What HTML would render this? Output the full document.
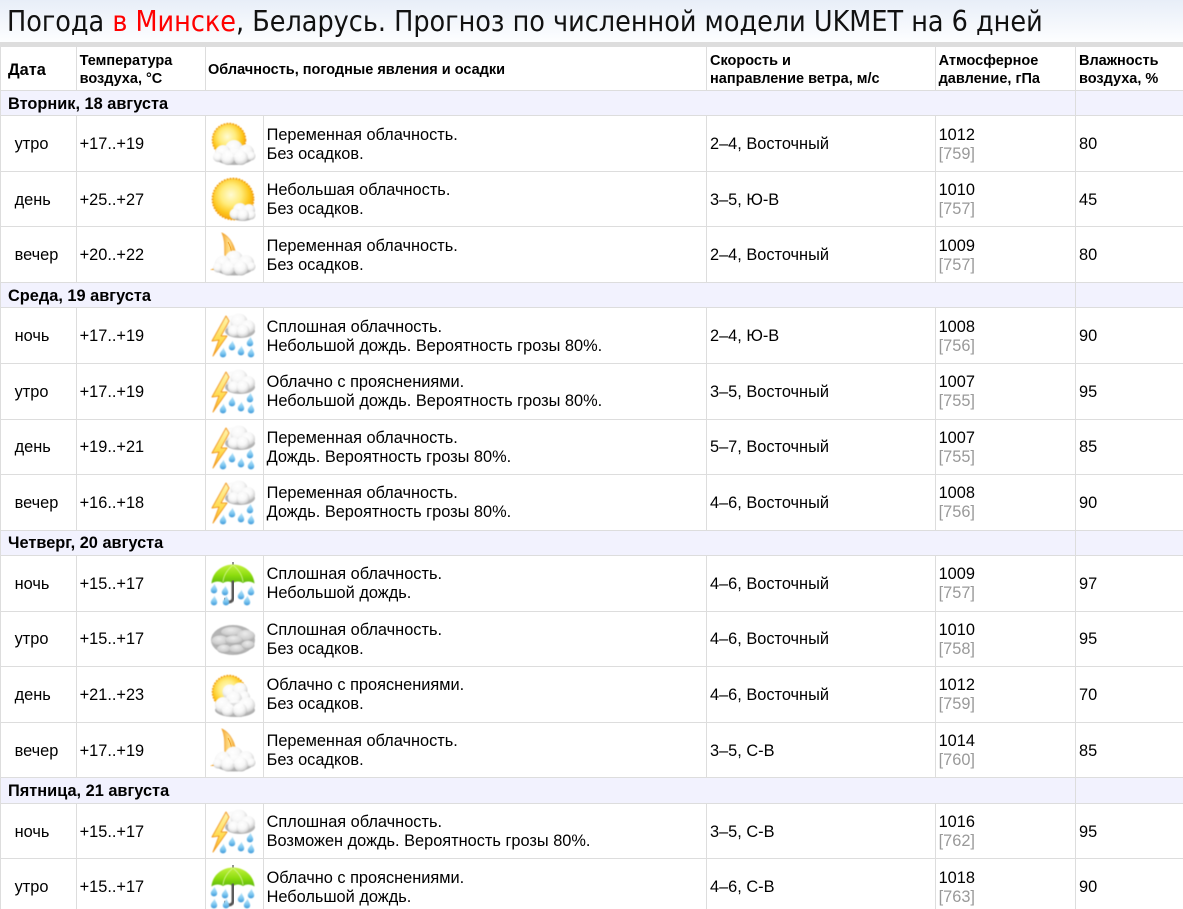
<!DOCTYPE html>
<html lang="ru"><head><meta charset="utf-8"><title>Погода в Минске</title>
<style>
html,body{margin:0;padding:0;background:#fff;width:1183px;height:909px;overflow:hidden}
#p{position:relative;width:1183px;height:909px;overflow:hidden;font:16.35px/19px "Liberation Sans",sans-serif;color:#000}
#t{position:absolute;left:0;top:0;width:1183px;height:42px;background:linear-gradient(to bottom,#e8eef8,#fdfeff)}
#t h1{margin:0;position:absolute;left:7px;top:3px;font:400 28.4px/38px "DejaVu Sans Condensed","DejaVu Sans",sans-serif;font-stretch:condensed;color:#111;white-space:nowrap}
#t b{font-weight:400;color:#f00}
#band{position:absolute;left:0;top:42px;width:1183px;height:5px;background:#ddd}
.r{position:absolute;left:0;width:1183px;border-bottom:1px solid #ddd}
.r>div{position:absolute;top:0;bottom:0;padding-top:2px;display:flex;align-items:center;border-left:1px solid #ddd;box-sizing:border-box;white-space:nowrap}
.a{left:0;width:76px;padding-left:13.6px}
.b{left:76px;width:129px;padding-left:2.6px}
.c{left:205px;width:58px}
.d{left:263px;width:443px;padding-left:2.6px}
.e{left:706px;width:229px;padding-left:3px}
.f{left:935px;width:140px;padding-left:2.6px}
.g{left:1075px;width:108px;padding-left:3px}
.r.h>div{font-weight:700;font-size:14.5px;line-height:18px;padding-top:2px}
.r.h>.a{padding-left:7px;font-size:16.35px;padding-top:3px}
.r.h>.c{width:501px;padding-left:2px}
.s{background:#f2f2fe}
.r.s>.w{left:0;width:1075px;padding-left:7px;font-weight:700}
.r.s>.g{padding:0}
.r.u>.d,.r.u>.f{padding-top:0}
.r.v>.a,.r.v>.b,.r.v>.e,.r.v>.g{padding-top:0}
.r.s.v>.w{padding-top:0}
i{font-style:normal;color:#999}
svg{position:absolute;left:4px;top:5px;width:46px;height:46px}
</style></head><body><div id="p">
<svg width="0" height="0" style="position:absolute;left:0;top:0">
<defs>
<radialGradient id="sun" cx=".45" cy=".4" r=".62"><stop offset="0" stop-color="#fffbd4"/><stop offset=".4" stop-color="#ffec7c"/><stop offset=".72" stop-color="#fdc81e"/><stop offset="1" stop-color="#f59f08"/></radialGradient>
<radialGradient id="pf" cx=".42" cy=".32" r=".72"><stop offset="0" stop-color="#fff"/><stop offset=".5" stop-color="#f7f7f7"/><stop offset=".8" stop-color="#d9d9d9"/><stop offset="1" stop-color="#a6a6a6"/></radialGradient>
<radialGradient id="gc" cx=".45" cy=".3" r=".75"><stop offset="0" stop-color="#ececec"/><stop offset=".6" stop-color="#cfcfcf"/><stop offset="1" stop-color="#999"/></radialGradient>
<linearGradient id="dr" x1="0" y1="0" x2="0" y2="1"><stop offset="0" stop-color="#c4e9fc"/><stop offset=".6" stop-color="#7cc6f0"/><stop offset="1" stop-color="#3a96d8"/></linearGradient>
<linearGradient id="bo" x1="0" y1="0" x2="0" y2="1"><stop offset="0" stop-color="#fff6b0"/><stop offset=".6" stop-color="#ffdc50"/><stop offset="1" stop-color="#fbb02a"/></linearGradient>
<linearGradient id="um" x1="0" y1="0" x2="0" y2="1"><stop offset="0" stop-color="#c4f040"/><stop offset=".55" stop-color="#8ede10"/><stop offset="1" stop-color="#5cb806"/></linearGradient>
<linearGradient id="mo" x1="0" y1="0" x2="1" y2="0"><stop offset="0" stop-color="#f5a832"/><stop offset=".5" stop-color="#ffdf8a"/><stop offset="1" stop-color="#f29f24"/></linearGradient>
<filter id="sf" x="-10%" y="-10%" width="120%" height="120%"><feGaussianBlur stdDeviation=".45"/></filter>
<g id="drop"><path d="M.6-5.5C1.2-2.8 3.2-1 3.2 1.3 3.2 3.2 1.700 4.4 0 4.4S-3.2 3.2-3.2 1.3C-3.2-1-.4-2.800.6-5.5Z" fill="url(#dr)" filter="url(#sf)"/></g>
<g id="cloudA" filter="url(#sf)">
<ellipse cx="24" cy="35" rx="20" ry="9" fill="#b0b0b0"/>
<circle cx="24" cy="28" r="9" fill="url(#pf)"/><circle cx="13" cy="32" r="8" fill="url(#pf)"/><circle cx="36" cy="31.5" r="8" fill="url(#pf)"/><circle cx="8" cy="36" r="5" fill="url(#pf)"/><circle cx="41" cy="35" r="4.5" fill="url(#pf)"/><circle cx="18" cy="37" r="7" fill="url(#pf)"/><circle cx="31" cy="37" r="7" fill="url(#pf)"/><ellipse cx="24" cy="32" rx="9" ry="4" fill="#fff" opacity=".6"/>
</g>
<g id="i1"><circle cx="19" cy="19" r="16.5" fill="url(#sun)" stroke="#f39c08" stroke-width="1.5" stroke-dasharray="1.8 1.2" filter="url(#sf)"/><use href="#cloudA"/></g>
<g id="i2"><circle cx="23" cy="22" r="20.5" fill="url(#sun)" stroke="#f39c08" stroke-width="1.7" stroke-dasharray="1.8 1.2" filter="url(#sf)"/>
<g filter="url(#sf)"><ellipse cx="33" cy="38" rx="12" ry="6" fill="#b0b0b0"/><circle cx="30" cy="33" r="7" fill="url(#pf)"/><circle cx="25" cy="37" r="5.5" fill="url(#pf)"/><circle cx="39" cy="33" r="6" fill="url(#pf)"/><circle cx="41" cy="38" r="4.5" fill="url(#pf)"/><circle cx="33" cy="38" r="6" fill="url(#pf)"/></g></g>
<g id="i3"><path d="M12 1C20 5 26 15 26 27L15 26C14 18 16 10 12 1Z" fill="url(#mo)" stroke="#f0a028" stroke-width=".7" filter="url(#sf)"/><path d="M18 10C21 15 22 21 22 26" stroke="#f0a028" stroke-width=".9" fill="none"/><path d="M0 38L7 35 11 38Z" fill="#f29a14" filter="url(#sf)"/><use href="#cloudA" y="-.5"/></g>
<g id="i4"><circle cx="19" cy="20" r="16.5" fill="url(#sun)" stroke="#f39c08" stroke-width="1.5" stroke-dasharray="1.8 1.2" filter="url(#sf)"/><g filter="url(#sf)"><circle cx="20" cy="20" r="7.5" fill="url(#pf)"/><circle cx="30" cy="18" r="7.5" fill="url(#pf)"/><circle cx="34" cy="25" r="6" fill="url(#pf)"/><circle cx="24" cy="27" r="8" fill="url(#pf)"/><ellipse cx="25" cy="38" rx="20" ry="7" fill="#b0b0b0"/><circle cx="13" cy="33" r="8" fill="url(#pf)"/><circle cx="37" cy="33" r="8" fill="url(#pf)"/><circle cx="18" cy="38" r="6.5" fill="url(#pf)"/><circle cx="30" cy="38" r="7" fill="url(#pf)"/><ellipse cx="25" cy="32" rx="8" ry="4" fill="#fff" opacity=".6"/></g></g>
<g id="storm"><g filter="url(#sf)"><ellipse cx="30" cy="18" rx="15" ry="7" fill="#b4b4b4"/><circle cx="22" cy="10" r="7.5" fill="url(#pf)"/><circle cx="29" cy="9" r="8.5" fill="url(#pf)"/><circle cx="38" cy="14" r="7" fill="url(#pf)"/><circle cx="24" cy="18" r="6" fill="url(#pf)"/><circle cx="33" cy="18" r="6.5" fill="url(#pf)"/></g>
<path d="M16 3L2 28 9 27 3 43 17 23 11 23 19 8Z" fill="url(#bo)" stroke="#f39a1c" stroke-width="1" stroke-linejoin="round" filter="url(#sf)"/>
<use href="#drop" x="13" y="40"/><use href="#drop" x="22" y="33"/><use href="#drop" x="31" y="38"/><use href="#drop" x="40" y="29"/><use href="#drop" x="41" y="40"/></g>
<g id="umb"><path d="M23 1V5" stroke="#666" stroke-width="1.4"/><path d="M1.500 22.5C2.500 11 12 3.500 23 3.500S43.500 11 44.500 22.5C41 20 36 20 33 22 30 20 26 20 23 22 20 20 16 20 13 22 10 20 5 20 1.500 22.5Z" fill="url(#um)" filter="url(#sf)"/><path d="M23 4C17 9 13.500 15 13 21M23 4C29 9 32.500 15 33 21" stroke="#d9f7a0" stroke-width=".8" fill="none" filter="url(#sf)"/>
<path d="M23 21V37C23 42 16 42 15 38.500" stroke="#555" stroke-width="3" fill="none" stroke-linecap="round" filter="url(#sf)"/>
<use href="#drop" x="4" y="28"/><use href="#drop" x="4" y="40"/><use href="#drop" x="15" y="30"/><use href="#drop" x="16" y="40"/><use href="#drop" x="31" y="34"/><use href="#drop" x="41" y="30"/><use href="#drop" x="37" y="40"/></g>
<g id="gray" filter="url(#sf)" transform="translate(0,-5)"><ellipse cx="23" cy="28" rx="22" ry="15" fill="#b4b4b4"/><ellipse cx="10" cy="29" rx="8.5" ry="5.5" fill="url(#gc)"/><ellipse cx="22" cy="20" rx="11" ry="5" fill="url(#gc)"/><ellipse cx="36" cy="24" rx="9" ry="6" fill="url(#gc)"/><ellipse cx="24" cy="28" rx="9" ry="4.5" fill="url(#gc)"/><ellipse cx="14" cy="37" rx="7" ry="4.5" fill="url(#gc)"/><ellipse cx="27" cy="37" rx="8" ry="4.5" fill="url(#gc)"/><ellipse cx="38" cy="33" rx="6.5" ry="4.5" fill="url(#gc)"/></g>
</defs></svg>

<div id="t"><h1>Погода <b>в Минске</b>, Беларусь. Прогноз по численной модели UKMET на 6 дней</h1></div>
<div id="band"></div>

<div class="r h" style="top:47px;height:43px"><div class="a">Дата</div><div class="b">Температура<br>воздуха, °С</div><div class="c">Облачность, погодные явления и осадки</div><div class="e">Скорость и<br>направление ветра, м/с</div><div class="f">Атмосферное<br>давление, гПа</div><div class="g">Влажность<br>воздуха, %</div></div>

<div class="r s" style="top:91px;height:24px"><div class="w">Вторник, 18 августа</div><div class="g"></div></div>
<div class="r" style="top:116px;height:55px"><div class="a">утро</div><div class="b">+17..+19</div><div class="c"><svg viewBox="0 0 46 46"><use href="#i1"/></svg></div><div class="d"><span>Переменная облачность.<br>Без осадков.</span></div><div class="e">2–4, Восточный</div><div class="f"><span>1012<br><i>[759]</i></span></div><div class="g">80</div></div>
<div class="r" style="top:172px;height:54px"><div class="a">день</div><div class="b">+25..+27</div><div class="c"><svg viewBox="0 0 46 46"><use href="#i2"/></svg></div><div class="d"><span>Небольшая облачность.<br>Без осадков.</span></div><div class="e">3–5, Ю-В</div><div class="f"><span>1010<br><i>[757]</i></span></div><div class="g">45</div></div>
<div class="r" style="top:227px;height:55px"><div class="a">вечер</div><div class="b">+20..+22</div><div class="c"><svg viewBox="0 0 46 46"><use href="#i3"/></svg></div><div class="d"><span>Переменная облачность.<br>Без осадков.</span></div><div class="e">2–4, Восточный</div><div class="f"><span>1009<br><i>[757]</i></span></div><div class="g">80</div></div>

<div class="r s" style="top:283px;height:24px"><div class="w">Среда, 19 августа</div><div class="g"></div></div>
<div class="r" style="top:308px;height:55px"><div class="a">ночь</div><div class="b">+17..+19</div><div class="c"><svg viewBox="0 0 46 46"><use href="#storm"/></svg></div><div class="d"><span>Сплошная облачность.<br>Небольшой дождь. Вероятность грозы 80%.</span></div><div class="e">2–4, Ю-В</div><div class="f"><span>1008<br><i>[756]</i></span></div><div class="g">90</div></div>
<div class="r u" style="top:364px;height:55px"><div class="a">утро</div><div class="b">+17..+19</div><div class="c"><svg viewBox="0 0 46 46"><use href="#storm"/></svg></div><div class="d"><span>Облачно с прояснениями.<br>Небольшой дождь. Вероятность грозы 80%.</span></div><div class="e">3–5, Восточный</div><div class="f"><span>1007<br><i>[755]</i></span></div><div class="g">95</div></div>
<div class="r v" style="top:420px;height:54px"><div class="a">день</div><div class="b">+19..+21</div><div class="c"><svg viewBox="0 0 46 46"><use href="#storm"/></svg></div><div class="d"><span>Переменная облачность.<br>Дождь. Вероятность грозы 80%.</span></div><div class="e">5–7, Восточный</div><div class="f"><span>1007<br><i>[755]</i></span></div><div class="g">85</div></div>
<div class="r u" style="top:475px;height:55px"><div class="a">вечер</div><div class="b">+16..+18</div><div class="c"><svg viewBox="0 0 46 46"><use href="#storm"/></svg></div><div class="d"><span>Переменная облачность.<br>Дождь. Вероятность грозы 80%.</span></div><div class="e">4–6, Восточный</div><div class="f"><span>1008<br><i>[756]</i></span></div><div class="g">90</div></div>

<div class="r s v" style="top:531px;height:24px"><div class="w">Четверг, 20 августа</div><div class="g"></div></div>
<div class="r u" style="top:556px;height:55px"><div class="a">ночь</div><div class="b">+15..+17</div><div class="c"><svg viewBox="0 0 46 46"><use href="#umb"/></svg></div><div class="d"><span>Сплошная облачность.<br>Небольшой дождь.</span></div><div class="e">4–6, Восточный</div><div class="f"><span>1009<br><i>[757]</i></span></div><div class="g">97</div></div>
<div class="r v" style="top:612px;height:54px"><div class="a">утро</div><div class="b">+15..+17</div><div class="c"><svg viewBox="0 0 46 46"><use href="#gray"/></svg></div><div class="d"><span>Сплошная облачность.<br>Без осадков.</span></div><div class="e">4–6, Восточный</div><div class="f"><span>1010<br><i>[758]</i></span></div><div class="g">95</div></div>
<div class="r u" style="top:667px;height:55px"><div class="a">день</div><div class="b">+21..+23</div><div class="c"><svg viewBox="0 0 46 46"><use href="#i4"/></svg></div><div class="d"><span>Облачно с прояснениями.<br>Без осадков.</span></div><div class="e">4–6, Восточный</div><div class="f"><span>1012<br><i>[759]</i></span></div><div class="g">70</div></div>
<div class="r" style="top:723px;height:54px"><div class="a">вечер</div><div class="b">+17..+19</div><div class="c"><svg viewBox="0 0 46 46"><use href="#i3"/></svg></div><div class="d"><span>Переменная облачность.<br>Без осадков.</span></div><div class="e">3–5, С-В</div><div class="f"><span>1014<br><i>[760]</i></span></div><div class="g">85</div></div>

<div class="r s" style="top:778px;height:25px"><div class="w">Пятница, 21 августа</div><div class="g"></div></div>
<div class="r" style="top:804px;height:54px"><div class="a">ночь</div><div class="b">+15..+17</div><div class="c"><svg viewBox="0 0 46 46"><use href="#storm"/></svg></div><div class="d"><span>Сплошная облачность.<br>Возможен дождь. Вероятность грозы 80%.</span></div><div class="e">3–5, С-В</div><div class="f"><span>1016<br><i>[762]</i></span></div><div class="g">95</div></div>
<div class="r" style="top:859px;height:55px"><div class="a">утро</div><div class="b">+15..+17</div><div class="c"><svg viewBox="0 0 46 46"><use href="#umb"/></svg></div><div class="d"><span>Облачно с прояснениями.<br>Небольшой дождь.</span></div><div class="e">4–6, С-В</div><div class="f"><span>1018<br><i>[763]</i></span></div><div class="g">90</div></div>
</div></body></html>
